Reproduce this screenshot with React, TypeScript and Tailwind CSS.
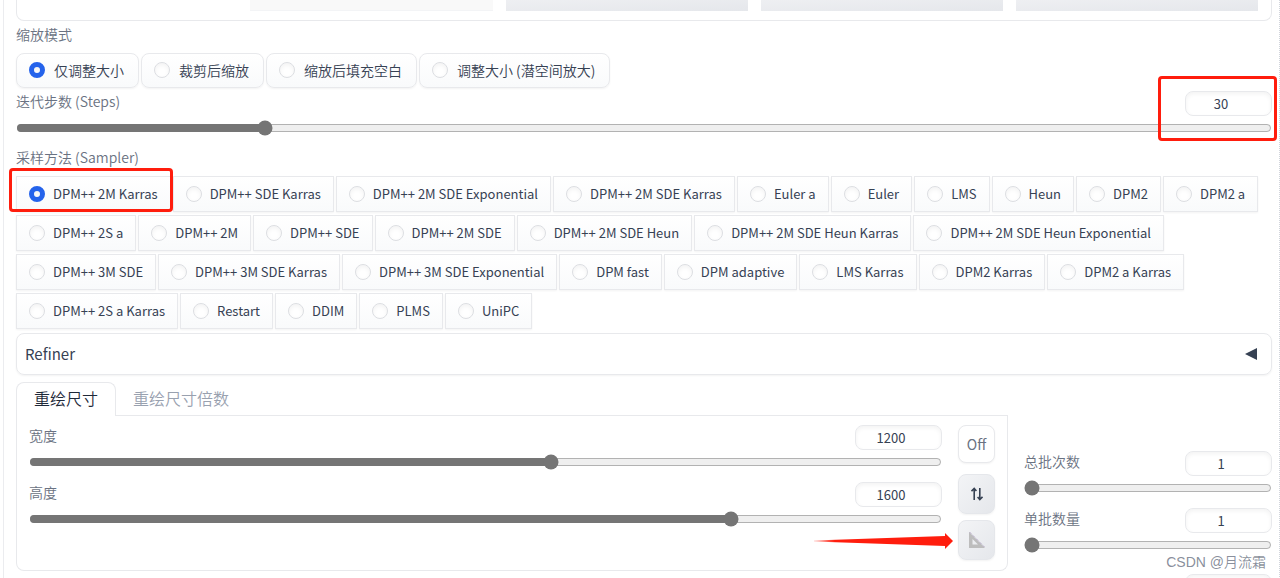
import { useId, useState } from "react";

const resizeModes = ["仅调整大小", "裁剪后缩放", "缩放后填充空白", "调整大小 (潜空间放大)"];

const samplers = [
    "DPM++ 2M Karras", "DPM++ SDE Karras", "DPM++ 2M SDE Exponential", "DPM++ 2M SDE Karras",
    "Euler a", "Euler", "LMS", "Heun", "DPM2", "DPM2 a",
    "DPM++ 2S a", "DPM++ 2M", "DPM++ SDE", "DPM++ 2M SDE", "DPM++ 2M SDE Heun",
    "DPM++ 2M SDE Heun Karras", "DPM++ 2M SDE Heun Exponential",
    "DPM++ 3M SDE", "DPM++ 3M SDE Karras", "DPM++ 3M SDE Exponential", "DPM fast", "DPM adaptive",
    "LMS Karras", "DPM2 Karras", "DPM2 a Karras",
    "DPM++ 2S a Karras", "Restart", "DDIM", "PLMS", "UniPC",
];

type SliderProps = {
    label: string
    min: number
    max: number
    initial: number
}

function SliderField({ label, min, max, initial }: SliderProps) {
    const id = useId();
    const [value, setValue] = useState(initial);
    return (
        <div>
            <div className="flex h-[25px] items-start justify-between">
                <label htmlFor={id} className="text-sm leading-5 font-[350] text-gray-500">{label}</label>
                <input
                    id={id}
                    type="number"
                    min={min}
                    max={max}
                    value={value}
                    onChange={(e) => setValue(Number(e.target.value))}
                    className="h-[25px] w-[87px] rounded-lg border border-[#e8e9ec] bg-white px-2 text-center text-[13px] text-gray-700 shadow-[inset_0_2px_4px_rgba(0,0,0,0.05)]"
                />
            </div>
            <input
                type="range"
                aria-label={label}
                min={min}
                max={max}
                value={value}
                onChange={(e) => setValue(Number(e.target.value))}
                className="mt-1 block h-4 w-full accent-[#757575]"
            />
        </div>
    )
}

type RadioProps = {
    label: string
    options: string[]
    itemClass: string
}

function RadioField({ label, options, itemClass }: RadioProps) {
    const id = useId();
    const [selected, setSelected] = useState(options[0]);
    return (
        <div role="radiogroup" aria-labelledby={id}>
            <p id={id} className="mb-[9px] text-sm leading-5 font-[350] text-gray-500">{label}</p>
            <div className="flex flex-wrap gap-x-[2px] gap-y-[3px]">
                {options.map((option) => (
                    <label
                        key={option}
                        className={`flex items-center border border-[#e8e9ec] bg-linear-to-b from-white to-gray-50 pl-3 text-gray-700 shadow-xs ${itemClass}`}
                    >
                        <input
                            type="radio"
                            name={id}
                            checked={selected === option}
                            onChange={() => setSelected(option)}
                            className="size-4 shrink-0 appearance-none rounded-full border border-[#dcdee2] bg-white shadow-[inset_0_2px_4px_rgba(0,0,0,0.05)] checked:border-[5px] checked:border-[#2563eb]"
                        />
                        <span className="whitespace-nowrap">{option}</span>
                    </label>
                ))}
            </div>
        </div>
    )
}

export default function App() {
    return (
        <main className="relative h-screen overflow-hidden bg-white font-['Noto_Sans_CJK_SC',sans-serif] font-normal">
            <div className="ml-[3px] min-h-full border-r border-l border-r-gray-300 border-l-[#ebecef] pr-[7px] pl-3 [border-right-style:dotted]">
                <div className="flex h-[21px] justify-end gap-[13px] rounded-b-lg border border-t-0 border-[#e8e9ec] pr-[13px] pb-[9px]">
                    <div className="w-[243px] border-b border-gray-100 bg-[#f9f9f9]" />
                    <div className="w-[242px] bg-linear-to-br from-[#eeeff2] to-gray-200" />
                    <div className="w-[242px] bg-linear-to-br from-[#eeeff2] to-gray-200" />
                    <div className="w-[242px] bg-linear-to-br from-[#eeeff2] to-gray-200" />
                </div>

                <div className="mt-[3px]">
                    <RadioField label="缩放模式" options={resizeModes} itemClass="h-[35px] gap-[9px] rounded-lg pr-[14px] pb-px text-sm leading-5 font-[350]" />
                </div>

                <div className="mt-[3px]">
                    <SliderField label="迭代步数 (Steps)" min={1} max={150} initial={30} />
                </div>

                <div className="mt-[11px]">
                    <RadioField label="采样方法 (Sampler)" options={samplers} itemClass="h-9 gap-2 pr-3 text-[13px]" />
                </div>

                <button type="button" className="mt-1 flex h-[42px] w-full items-center justify-between rounded-lg border border-[#e8e9ec] pr-[14px] pl-2 text-[15px] leading-5 text-gray-700 shadow-xs">
                    <span>Refiner</span>
                    <svg viewBox="0 0 12 12" className="size-3 fill-gray-700"><path d="M0 6 12 0v12z" /></svg>
                </button>

                <div className="mt-[7px] flex gap-4">
                    <section className="min-w-0 flex-1">
                        <div className="flex h-[33px]" role="tablist">
                            <button type="button" role="tab" aria-selected="true" className="-mb-px w-[100px] rounded-t-lg border border-b-0 border-[#e8e9ec] bg-white pb-1 text-base leading-6 font-[350] text-gray-800">重绘尺寸</button>
                            <div className="-mb-px flex flex-1 items-center border-b border-[#e8e9ec] pb-[2px] pl-[17px]">
                                <button type="button" role="tab" aria-selected="false" className="text-base leading-6 font-[350] text-gray-400">重绘尺寸倍数</button>
                            </div>
                        </div>
                        <div className="flex h-[156px] gap-4 rounded-b-lg border border-t-0 border-[#e8e9ec] px-3 pt-[10px]">
                            <div className="flex min-w-0 flex-1 flex-col gap-3">
                                <SliderField label="宽度" min={64} max={2048} initial={1200} />
                                <SliderField label="高度" min={64} max={2048} initial={1600} />
                            </div>
                            <div className="flex w-[37px] flex-col">
                                <select aria-label="锁定宽高比" className="h-[38px] appearance-none rounded-lg border border-[#e8e9ec] bg-white text-center text-sm text-gray-500 shadow-xs">
                                    <option>Off</option>
                                </select>
                                <button type="button" aria-label="交换宽高" className="mt-[11px] flex h-10 items-center justify-center rounded-lg border border-gray-200 bg-linear-to-br from-gray-100 to-gray-200 text-gray-700 shadow-xs">
                                    <svg viewBox="0 0 12 14" className="h-[14px] w-3 fill-none stroke-current stroke-[1.6]"><path d="M3.2 13V1.500M.5 4.200l2.700-2.700 2.200 2.500M8.800 1v11.500M6.600 10l2.200 2.500 2.700-2.700" /></svg>
                                </button>
                                <button type="button" aria-label="检测图像尺寸" className="mt-[6px] flex h-10 items-center justify-center rounded-lg border border-gray-200 bg-linear-to-br from-gray-100 to-gray-200 shadow-xs">
                                    <svg viewBox="0 0 16 16" className="size-4"><path fillRule="evenodd" d="M0 0 16 16H0zM3.500 7v5.500H9z" fill="#bdbdbd" /><path d="m.5 0 15.500 15.500" stroke="#a08fb5" strokeDasharray="1 1" /></svg>
                                </button>
                            </div>
                        </div>
                    </section>

                    <section className="mt-[69px] flex w-[248px] flex-col gap-3">
                        <SliderField label="总批次数" min={1} max={100} initial={1} />
                        <SliderField label="单批数量" min={1} max={8} initial={1} />
                    </section>
                </div>
                <div className="mt-[3px]">
                    <SliderField label="提示词引导系数" min={1} max={30} initial={7} />
                </div>
            </div>

            {/* annotations over the form */}
            <div className="absolute top-[168px] left-[9px] h-[44px] w-[164px] rounded border-3 border-[#ff1d0d]" />
            <div className="absolute top-[76px] right-[3px] h-[65px] w-[119px] rounded border-3 border-[#ff1d0d]" />
            <svg viewBox="0 0 140 16" className="absolute top-[533px] right-[326px] h-4 w-[140px]">
                <defs>
                    <linearGradient id="arrow">
                        <stop offset="0" stopColor="#ff1d0d" stopOpacity="0.2" />
                        <stop offset=".15" stopColor="#ff1d0d" />
                    </linearGradient>
                </defs>
                <path d="M0 7.500 131 3V0l8 8-8 8v-3L0 8.500z" fill="url(#arrow)" />
            </svg>
            <p className="absolute right-[14px] bottom-[6px] font-['Liberation_Sans','Noto_Sans_CJK_SC',sans-serif] text-sm leading-5 font-[350] text-gray-500/80">CSDN @月流霜</p>
        </main>
    )
}
